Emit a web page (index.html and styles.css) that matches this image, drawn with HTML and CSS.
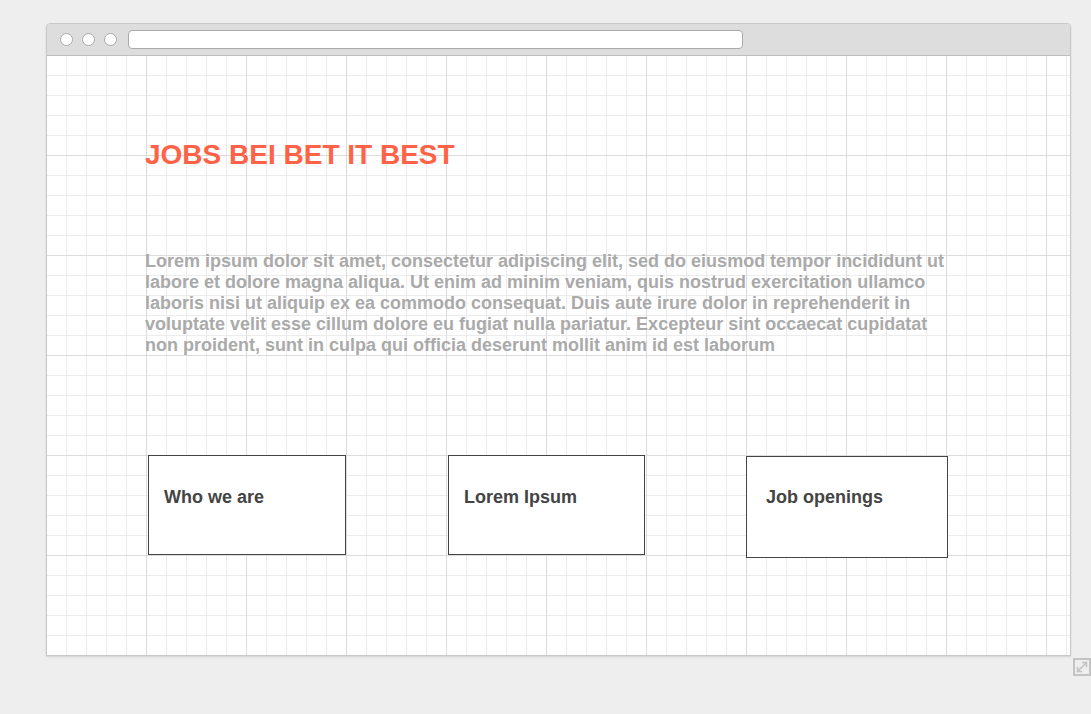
FILE: index.html
```html
<!DOCTYPE html>
<html>
<head>
<meta charset="utf-8">
<link rel="stylesheet" href="styles.css">
</head>
<body>
<div class="window">
  <div class="titlebar">
    <span class="dot"></span><span class="dot"></span><span class="dot"></span>
    <div class="url"></div>
  </div>
  <div class="canvas">
    <h1 class="title">JOBS BEI BET IT BEST</h1>
    <p class="lead">Lorem ipsum dolor sit amet, consectetur adipiscing elit, sed do eiusmod tempor incididunt ut labore et dolore magna aliqua. Ut enim ad minim veniam, quis nostrud exercitation ullamco laboris nisi ut aliquip ex ea commodo consequat. Duis aute irure dolor in reprehenderit in voluptate velit esse cillum dolore eu fugiat nulla pariatur. Excepteur sint occaecat cupidatat non proident, sunt in culpa qui officia deserunt mollit anim id est laborum</p>
    <div class="cards">
      <div class="card c1">Who we are</div>
      <div class="card c2">Lorem Ipsum</div>
      <div class="card c3">Job openings</div>
    </div>
  </div>
</div>
<div class="resize">
  <svg width="18" height="18" viewBox="0 0 18 18"><rect x="1" y="1" width="16" height="16" fill="none" stroke="#c4c4c4" stroke-width="2"/><path d="M4.5 13.5 L13.5 4.5 M9 4.5 H13.5 V9 M4.5 9 V13.5 H9" fill="none" stroke="#c4c4c4" stroke-width="1.6"/></svg>
</div>
</body>
</html>
```
FILE: styles.css
```css
html, body { margin: 0; padding: 0; }
body {
  background: #eeeeee;
  width: 1091px;
  height: 714px;
  overflow: hidden;
  font-family: "Liberation Sans", Arial, sans-serif;
  position: relative;
}
.window {
  margin: 23px 0 0 46px;
  width: 1025px;
  height: 633px;
  box-sizing: border-box;
  border: 1px solid #c8c8c8;
  border-radius: 4px 4px 0 0;
  background: #fff;
  box-shadow: 0 1px 2px rgba(0,0,0,0.12);
  display: flex;
  flex-direction: column;
}
.titlebar {
  height: 31px;
  flex: none;
  background: #dddddd;
  border-bottom: 1px solid #bdbdbd;
  border-radius: 3px 3px 0 0;
  display: flex;
  align-items: center;
  padding-left: 13px;
  gap: 9px;
}
.dot {
  width: 13px;
  height: 13px;
  box-sizing: border-box;
  border-radius: 50%;
  background: #fff;
  border: 1px solid #aaa;
}
.url {
  margin-left: 2px;
  width: 615px;
  height: 19px;
  box-sizing: border-box;
  background: #fff;
  border: 1px solid #aaa;
  border-radius: 4px;
}
.canvas {
  flex: 1;
  background-color: #fff;
  background-image:
    linear-gradient(to right, #dcdcdc 1px, transparent 1px),
    linear-gradient(to bottom, #dcdcdc 1px, transparent 1px),
    linear-gradient(to right, #ececec 1px, transparent 1px),
    linear-gradient(to bottom, #ececec 1px, transparent 1px);
  background-size: 100px 100px, 100px 100px, 20px 20px, 20px 20px;
  background-position: -1px -1px, -1px -1px, -1px -1px, -1px -1px;
  padding: 0 0 0 98px;
}
.title {
  margin: 83px 0 0 0;
  color: #ff6347;
  font-size: 28px;
  font-weight: bold;
  line-height: 32px;
}
.lead {
  margin: 80px 0 0 0;
  width: 805px;
  color: #aaaaaa;
  font-size: 18px;
  font-weight: bold;
  line-height: 21px;
}
.cards {
  margin-top: 99px;
  display: flex;
  align-items: flex-start;
}
.card {
  box-sizing: border-box;
  height: 100px;
  border: 1px solid #444;
  background: #fff;
  color: #444;
  font-size: 18px;
  font-weight: bold;
  padding: 31px 0 0 15px;
  line-height: 20px;
}
.c1 { width: 198px; margin-left: 3px; }
.c2 { width: 197px; margin-left: 102px; }
.c3 { width: 202px; margin-left: 101px; height: 102px; padding-left: 19px; margin-top: 1px; padding-top: 30px; }
.resize {
  position: absolute;
  left: 1073px;
  top: 658px;
  width: 18px;
  height: 18px;
}
.resize svg { display: block; }
```
